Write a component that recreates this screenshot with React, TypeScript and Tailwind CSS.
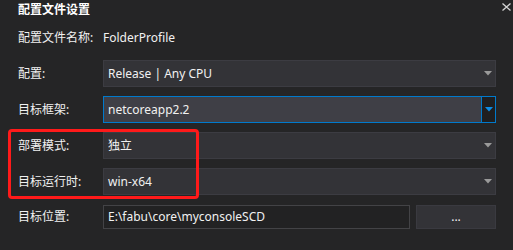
const font = { fontFamily: '"Noto Sans", "Noto Sans CJK SC", sans-serif' }

function Arrow({ color = "#9a9a9a" }: { color?: string }) {
  return (
    <svg width="8" height="5" viewBox="0 0 8 5">
      <path d="M0 0h8L4 4.5z" fill={color} />
    </svg>
  )
}

function Select({ value, focused = false }: { value: string; focused?: boolean }) {
  if (focused) {
    return (
      <div className="flex h-full w-[393px] items-stretch border border-[#007acc] bg-[#3f3f46]">
        <span className="flex flex-1 items-center pl-[4px] text-[12px] text-[#f1f1f1]">{value}</span>
        <span className="flex w-[14px] items-center justify-center border-l border-[#007acc] bg-[#1f1f20]">
          <Arrow color="#0e8ee6" />
        </span>
      </div>
    )
  }
  return (
    <div className="flex h-full w-[393px] items-center justify-between border border-[#3c3c42] bg-[#333337] pl-[4px] pr-[3px]">
      <span className="text-[12px] text-[#f1f1f1]">{value}</span>
      <Arrow />
    </div>
  )
}

function Row({ label, children, className }: { label: string; children: React.ReactNode; className: string }) {
  return (
    <div className={`flex items-stretch ${className}`}>
      <span className="flex w-[85px] items-center text-[12px] text-[#f1f1f1]">{label}</span>
      {children}
    </div>
  )
}

export default function App() {
  return (
    <div className="relative h-[250px] w-[513px] overflow-hidden bg-[#252526] pl-[18px] text-[#f1f1f1]" style={font}>
      <div className="flex h-[20px] items-center justify-between">
        <span className="text-[12px] font-bold text-white">配置文件设置</span>
        <svg className="mr-[2px] -mt-[7px]" width="9" height="8" viewBox="0 0 9 8">
          <path d="M0.5 0.5l8 7M8.5 0.5l-8 7" stroke="#d4d4d4" strokeWidth="1.3" />
        </svg>
      </div>
      <Row label="配置文件名称:" className="mt-[8px] h-[20px]">
        <span className="flex items-center text-[12px]">FolderProfile</span>
      </Row>
      <Row label="配置:" className="mt-[12px] h-[27px]">
        <Select value="Release | Any CPU" />
      </Row>
      <Row label="目标框架:" className="mt-[9px] h-[27px]">
        <Select value="netcoreapp2.2" focused />
      </Row>
      <Row label="部署模式:" className="mt-[9px] h-[27px]">
        <Select value="独立" />
      </Row>
      <Row label="目标运行时:" className="mt-[9px] h-[27px]">
        <Select value="win-x64" />
      </Row>
      <Row label="目标位置:" className="mt-[10px] h-[24px]">
        <div className="flex w-[307px] items-center border border-[#434346] bg-[#222223] pl-[4px] text-[12px]">
          E:\fabu\core\myconsoleSCD
        </div>
        <div className="ml-[6px] flex w-[80px] items-center justify-center border border-[#3a3a40] bg-[#333337] text-[12px]">
          ...
        </div>
      </Row>
      <div className="pointer-events-none absolute left-[8px] top-[129px] h-[70px] w-[191px] rounded-[4px] border-[3px] border-[#ff1a1a]" />
    </div>
  )
}
